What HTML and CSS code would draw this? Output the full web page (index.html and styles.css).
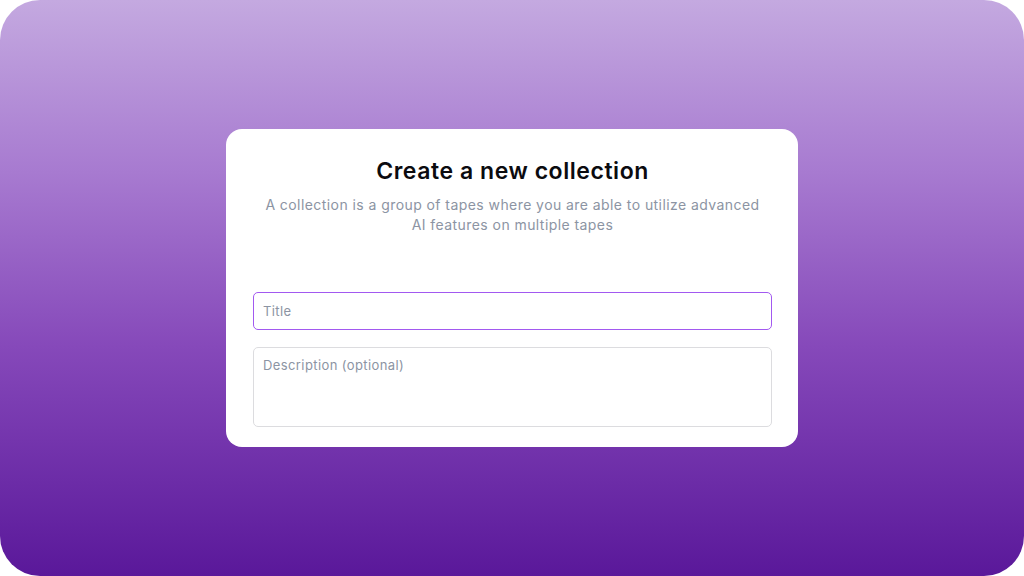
FILE: index.html
```html
<!DOCTYPE html>
<html lang="en">
<head>
    <meta charset="UTF-8">
    <title>Create a new collection</title>
    <link rel="stylesheet" href="styles.css">
</head>
<body>
<div class="frame">
    <div class="card">
        <h1 class="card-title">Create a new collection</h1>
        <p class="card-text">A collection is a group of tapes where you are able to utilize advanced AI features on multiple tapes</p>
        <form class="card-form">
            <input class="field field-active" type="text" placeholder="Title">
            <textarea class="field field-area" placeholder="Description (optional)"></textarea>
        </form>
    </div>
</div>
</body>
</html>
```

FILE: styles.css
```css
html, body {
    margin: 0;
    padding: 0;
    background: #ffffff;
}

body {
    font-family: Inter, "Noto Sans", sans-serif;
}

.frame {
    width: 1024px;
    height: 576px;
    border-radius: 40px;
    overflow: hidden;
    background: linear-gradient(180deg, #c4a9e0 0%, #a77ad0 30%, #8649ba 60%, #5a189a 100%);
    display: flex;
    align-items: center;
    justify-content: center;
}

.card {
    width: 572px;
    height: 318px;
    box-sizing: border-box;
    background: #ffffff;
    border-radius: 16px;
    padding: 29px 26px 0 27px;
}

.card-title {
    margin: 0;
    text-align: center;
    font-size: 23px;
    line-height: 26px;
    font-weight: 600;
    color: #0b0b0f;
    letter-spacing: 0.55px;
}

.card-text {
    margin: 11px auto 0;
    width: 506px;
    text-align: center;
    font-size: 14px;
    line-height: 20px;
    color: #8c94a3;
    letter-spacing: 0.43px;
}

.card-form {
    margin-top: 57px;
    display: flex;
    flex-direction: column;
    gap: 17px;
}

.field {
    box-sizing: border-box;
    width: 519px;
    border: 1px solid #dcdcdf;
    border-radius: 5px;
    font-family: inherit;
    font-size: 13px;
    letter-spacing: 0.4px;
    color: #333;
    padding: 0 9px;
    background: #ffffff;
    outline: none;
}

.field::placeholder {
    color: #8c94a3;
}

.field-active {
    height: 38px;
    border: 1.5px solid #a259f0;
}

.field-area {
    height: 80px;
    padding-top: 9px;
    resize: none;
}
```
